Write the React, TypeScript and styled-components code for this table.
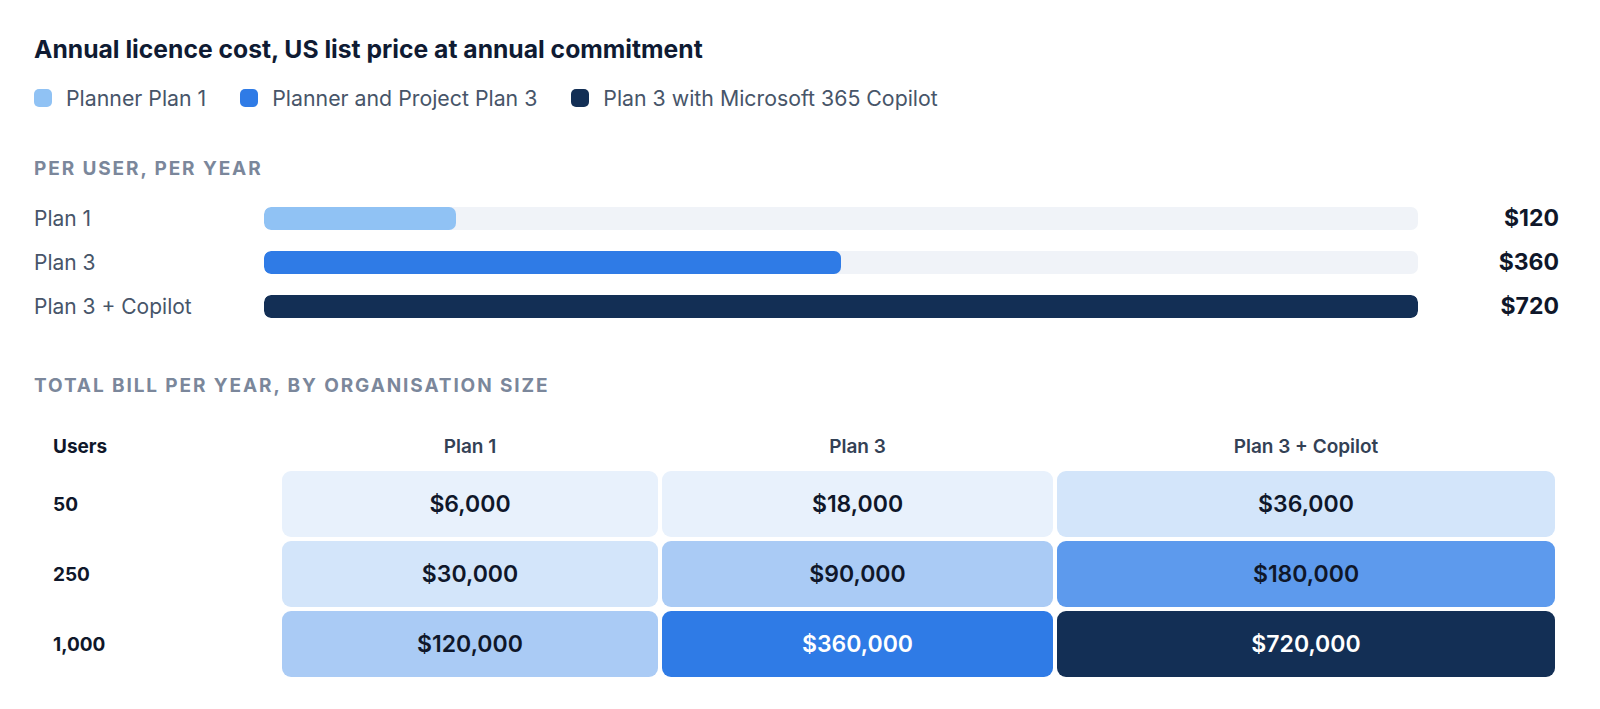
import React from "react";
import styled, { createGlobalStyle } from "styled-components";

const GlobalStyle = createGlobalStyle`
  body {
    margin: 0;
    background: #ffffff;
    font-family: Inter, "Noto Sans", sans-serif;
  }
`;

const plans = [
  { key: "p1", legend: "Planner Plan 1", label: "Plan 1", price: 120, color: "#90c2f4" },
  { key: "p3", legend: "Planner and Project Plan 3", label: "Plan 3", price: 360, color: "#2f7be6" },
  { key: "cp", legend: "Plan 3 with Microsoft 365 Copilot", label: "Plan 3 + Copilot", price: 720, color: "#132f55" },
];

const sizes = [50, 250, 1000];

// shade steps, lightest to darkest
const shades = ["#e8f1fc", "#d3e5fa", "#aacbf5", "#5d9aed", "#2f7be6", "#132f55"];

const shadeFor = (v: number) => {
  if (v <= 18000) return 0;
  if (v <= 36000) return 1;
  if (v <= 120000) return 2;
  if (v <= 180000) return 3;
  if (v <= 360000) return 4;
  return 5;
};

const money = (v: number) => "$" + v.toLocaleString("en-US");

function App() {
  const max = Math.max(...plans.map(p => p.price));
  return (
    <Page>
      <GlobalStyle />
      <Title>Annual licence cost, US list price at annual commitment</Title>
      <Legend>
        {plans.map(p => (
          <LegendItem key={p.key}>
            <Swatch color={p.color} />
            {p.legend}
          </LegendItem>
        ))}
      </Legend>

      <SectionLabel>Per user, per year</SectionLabel>
      <Bars>
        {plans.map(p => (
          <BarRow key={p.key}>
            <BarLabel>{p.label}</BarLabel>
            <Track>
              <Fill color={p.color} style={{ width: `${(p.price / max) * 100}%` }} />
            </Track>
            <BarValue>{money(p.price)}</BarValue>
          </BarRow>
        ))}
      </Bars>

      <SectionLabel $top={52}>Total bill per year, by organisation size</SectionLabel>
      <Grid>
        <HeadCell $left>Users</HeadCell>
        {plans.map(p => (
          <HeadCell key={p.key}>{p.label}</HeadCell>
        ))}
        {sizes.map(n => (
          <React.Fragment key={n}>
            <UsersCell>{n.toLocaleString("en-US")}</UsersCell>
            {plans.map(p => {
              const total = n * p.price;
              const s = shadeFor(total);
              return (
                <ValueCell key={p.key} $bg={shades[s]} $light={s >= 4}>
                  {money(total)}
                </ValueCell>
              );
            })}
          </React.Fragment>
        ))}
      </Grid>
    </Page>
  );
}

const Page = styled.div`
  padding: 33px 41px 30px 34px;
  color: #0f172a;
`;

const Title = styled.h1`
  margin: 0;
  font-size: 24.7px;
  line-height: 32px;
  font-weight: 700;
  color: #0f1b33;
`;

const Legend = styled.div`
  display: flex;
  gap: 34px;
  margin-top: 19px;
`;

const LegendItem = styled.div`
  display: flex;
  align-items: center;
  gap: 14px;
  font-size: 21.3px;
  line-height: 28px;
  color: #475569;
`;

const Swatch = styled.span<{ color: string }>`
  width: 18px;
  height: 18px;
  border-radius: 5px;
  background: ${p => p.color};
`;

const SectionLabel = styled.div<{ $top?: number }>`
  margin-top: ${p => p.$top ?? 45}px;
  font-size: 19px;
  line-height: 24px;
  font-weight: 700;
  letter-spacing: 0.1em;
  text-transform: uppercase;
  color: #7b879b;
`;

const Bars = styled.div`
  display: flex;
  flex-direction: column;
  gap: 12px;
  margin-top: 21px;
`;

const BarRow = styled.div`
  display: grid;
  grid-template-columns: 230px 1fr 141px;
  align-items: center;
  height: 32px;
`;

const BarLabel = styled.div`
  font-size: 21px;
  color: #475569;
`;

const Track = styled.div`
  height: 23px;
  border-radius: 7px;
  background: #f0f3f8;
  overflow: hidden;
`;

const Fill = styled.div<{ color: string }>`
  height: 100%;
  border-radius: 7px;
  background: ${p => p.color};
`;

const BarValue = styled.div`
  text-align: right;
  font-size: 23px;
  font-weight: 700;
  color: #0f172a;
`;

const Grid = styled.div`
  display: grid;
  grid-template-columns: 244px 376px 391px 498px;
  grid-template-rows: 42px repeat(3, 66px);
  gap: 4px;
  margin-top: 27px;
`;

const HeadCell = styled.div<{ $left?: boolean }>`
  display: flex;
  align-items: center;
  justify-content: ${p => (p.$left ? "flex-start" : "center")};
  padding-left: ${p => (p.$left ? "19px" : "0")};
  font-size: 19px;
  font-weight: ${p => (p.$left ? 700 : 600)};
  color: ${p => (p.$left ? "#0f172a" : "#334155")};
`;

const UsersCell = styled.div`
  display: flex;
  align-items: center;
  padding-left: 19px;
  font-size: 19px;
  font-weight: 700;
  color: #0f172a;
`;

const ValueCell = styled.div<{ $bg: string; $light: boolean }>`
  display: flex;
  align-items: center;
  justify-content: center;
  border-radius: 9px;
  background: ${p => p.$bg};
  color: ${p => (p.$light ? "#ffffff" : "#0f172a")};
  font-size: 23px;
  font-weight: 600;
`;

export default App;
